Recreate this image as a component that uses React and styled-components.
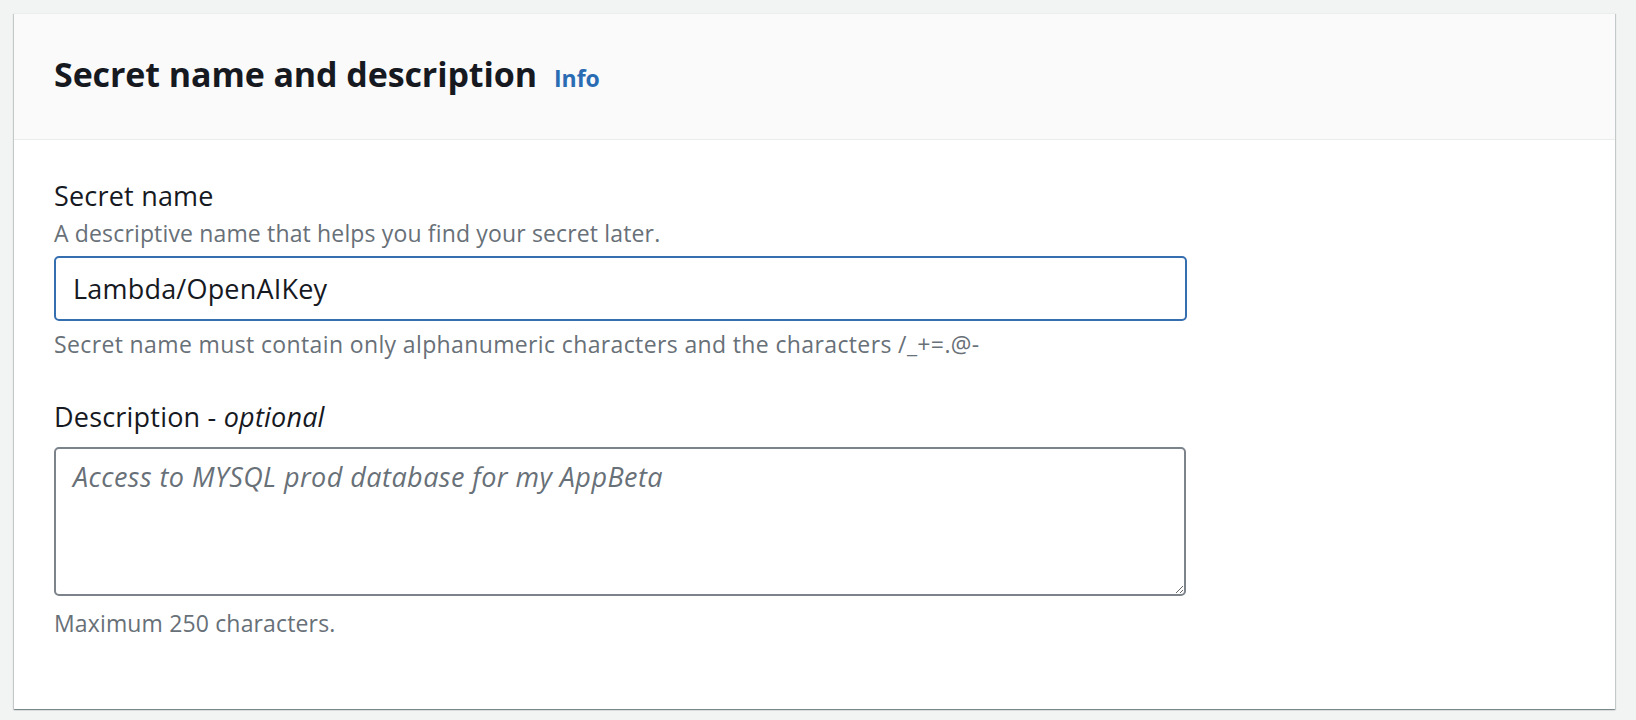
import React from "react";
import styled, { createGlobalStyle } from "styled-components";

const GlobalStyle = createGlobalStyle`
  html, body {
    margin: 0;
    padding: 0;
    background: #f2f3f3;
    font-family: "Open Sans", "Noto Sans", sans-serif;
    color: #16191f;
  }
`;

const Page = styled.div`
  padding: 13px 21px 10px 14px;
`;

const Card = styled.section`
  background: #ffffff;
  border-top: 1px solid #eaeded;
  box-shadow: 0 1px 1px 0 rgba(0, 28, 36, 0.3), 1px 1px 1px 0 rgba(0, 28, 36, 0.15),
    -1px 1px 1px 0 rgba(0, 28, 36, 0.15);
`;

const Header = styled.header`
  display: flex;
  align-items: baseline;
  gap: 17px;
  padding: 38px 40px 43px;
  background: #fafafa;
  border-bottom: 1px solid #eaeded;
`;

const Title = styled.h2`
  margin: 0;
  font-size: 34px;
  line-height: 44px;
  font-weight: 700;
  letter-spacing: -0.1px;
  color: #16191f;
`;

const InfoLink = styled.a`
  font-size: 23px;
  font-weight: 700;
  color: #2a6cb3;
  text-decoration: none;
  cursor: pointer;
`;

const Body = styled.div`
  padding: 41px 40px 73px;
`;

const Field = styled.div`
  display: flex;
  flex-direction: column;
  & + & {
    margin-top: 45px;
  }
`;

const Label = styled.label`
  font-size: 27px;
  line-height: 30px;
  letter-spacing: 0.2px;
  color: #16191f;
  & em {
    font-style: italic;
  }
`;

const Hint = styled.div`
  font-size: 23px;
  line-height: 26px;
  letter-spacing: ${(p) => p.$spacing ?? 0.15}px;
  color: #687078;
  margin-top: ${(p) => p.$top || 0}px;
`;

const TextInput = styled.input`
  box-sizing: border-box;
  width: 1133px;
  height: 65px;
  margin-top: 10px;
  padding: 0 17px;
  border: 2px solid #366fb0;
  border-radius: 5px;
  font-family: inherit;
  font-size: 27px;
  letter-spacing: 0.2px;
  color: #16191f;
  outline: none;
`;

const TextArea = styled.textarea`
  box-sizing: border-box;
  width: 1132px;
  height: 149px;
  margin-top: 15px;
  padding: 13px 17px;
  border: 2px solid #7d838b;
  border-radius: 5px;
  font-family: inherit;
  font-size: 27px;
  line-height: 30px;
  letter-spacing: 0.45px;
  color: #16191f;
  outline: none;
  resize: vertical;
  &::placeholder {
    color: #687078;
    font-style: italic;
  }
`;

export default function App() {
  return (
    <>
      <GlobalStyle />
      <Page>
        <Card>
          <Header>
            <Title>Secret name and description</Title>
            <InfoLink>Info</InfoLink>
          </Header>
          <Body>
            <Field>
              <Label htmlFor="secret-name">Secret name</Label>
              <Hint $top={9}>A descriptive name that helps you find your secret later.</Hint>
              <TextInput id="secret-name" defaultValue="Lambda/OpenAIKey" />
              <Hint $top={10} $spacing={0.37}>
                Secret name must contain only alphanumeric characters and the characters /_+=.@-
              </Hint>
            </Field>
            <Field>
              <Label htmlFor="secret-desc">
                Description - <em>optional</em>
              </Label>
              <TextArea
                id="secret-desc"
                placeholder="Access to MYSQL prod database for my AppBeta"
              />
              <Hint $top={14}>Maximum 250 characters.</Hint>
            </Field>
          </Body>
        </Card>
      </Page>
    </>
  );
}
